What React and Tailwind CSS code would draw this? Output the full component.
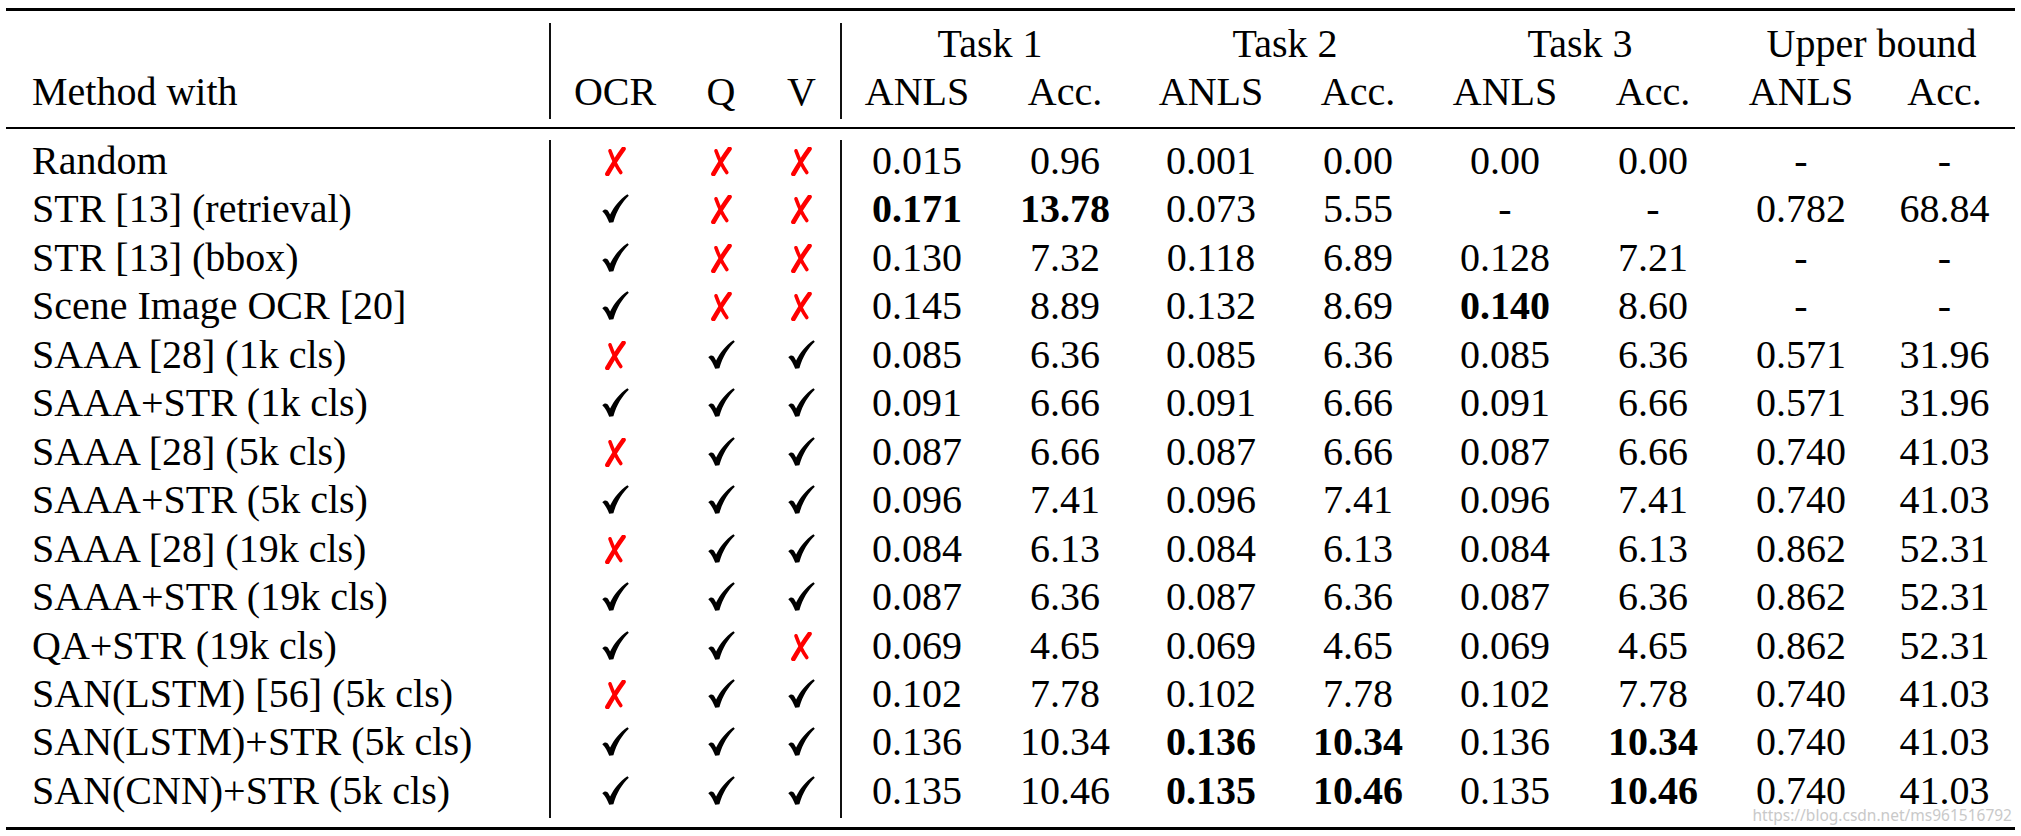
import React from "react";

const COLS =
  "grid grid-cols-[543px_130px_84px_77px_152px_146px_146px_148px_146px_150px_146px_141px]";
const F = "font-serif text-[40px] leading-[41px] text-black ";

function Check() {
  return (
    <svg width="27" height="29" viewBox="0 0 27 29">
      <path
        d="M0.3 17.2 C2.6 14.8 5.2 15.2 6.6 17.8 L8.1 20.6 C12 12.6 17.6 5.6 25.4 0.2 L26.8 1.8 C20 8.4 14.8 16.6 11.4 28.2 L7.2 28.8 C5.4 24.2 3.2 19.8 0.3 17.2 Z"
        fill="#000"
      />
    </svg>
  );
}

function Cross() {
  return (
    <svg width="23" height="29" viewBox="0 0 23 29">
      <path d="M19.5 1.8 Q12 12 3.4 27" stroke="#ff0000" strokeWidth="4.6" strokeLinecap="round" fill="none" />
      <path d="M6 3.8 Q10.5 16.5 16.8 25.5" stroke="#ff0000" strokeWidth="3.6" strokeLinecap="round" fill="none" />
    </svg>
  );
}

const rows = [
  ["Random", "x", "x", "x", ["0.015", "0.96", "0.001", "0.00", "0.00", "0.00", "-", "-"], []],
  ["STR [13] (retrieval)", "c", "x", "x", ["0.171", "13.78", "0.073", "5.55", "-", "-", "0.782", "68.84"], [0, 1]],
  ["STR [13] (bbox)", "c", "x", "x", ["0.130", "7.32", "0.118", "6.89", "0.128", "7.21", "-", "-"], []],
  ["Scene Image OCR [20]", "c", "x", "x", ["0.145", "8.89", "0.132", "8.69", "0.140", "8.60", "-", "-"], [4]],
  ["SAAA [28] (1k cls)", "x", "c", "c", ["0.085", "6.36", "0.085", "6.36", "0.085", "6.36", "0.571", "31.96"], []],
  ["SAAA+STR (1k cls)", "c", "c", "c", ["0.091", "6.66", "0.091", "6.66", "0.091", "6.66", "0.571", "31.96"], []],
  ["SAAA [28] (5k cls)", "x", "c", "c", ["0.087", "6.66", "0.087", "6.66", "0.087", "6.66", "0.740", "41.03"], []],
  ["SAAA+STR (5k cls)", "c", "c", "c", ["0.096", "7.41", "0.096", "7.41", "0.096", "7.41", "0.740", "41.03"], []],
  ["SAAA [28] (19k cls)", "x", "c", "c", ["0.084", "6.13", "0.084", "6.13", "0.084", "6.13", "0.862", "52.31"], []],
  ["SAAA+STR (19k cls)", "c", "c", "c", ["0.087", "6.36", "0.087", "6.36", "0.087", "6.36", "0.862", "52.31"], []],
  ["QA+STR (19k cls)", "c", "c", "x", ["0.069", "4.65", "0.069", "4.65", "0.069", "4.65", "0.862", "52.31"], []],
  ["SAN(LSTM) [56] (5k cls)", "x", "c", "c", ["0.102", "7.78", "0.102", "7.78", "0.102", "7.78", "0.740", "41.03"], []],
  ["SAN(LSTM)+STR (5k cls)", "c", "c", "c", ["0.136", "10.34", "0.136", "10.34", "0.136", "10.34", "0.740", "41.03"], [2, 3, 5]],
  ["SAN(CNN)+STR (5k cls)", "c", "c", "c", ["0.135", "10.46", "0.135", "10.46", "0.135", "10.46", "0.740", "41.03"], [2, 3, 5]],
];

function Mark({ v, border }) {
  return (
    <div
      className={
        "flex justify-center items-start " +
        (v === "x" ? "pt-[7px] " : "pt-[6px] ") +
        (border ? "border-l-2 border-[#111]" : "")
      }
    >
      {v === "x" ? <Cross /> : <Check />}
    </div>
  );
}

function H({ className = "", children }) {
  return <div className={F + "text-center " + className}>{children}</div>;
}

export default function App() {
  return (
    <div className="relative w-[2021px] h-[836px] bg-white overflow-hidden font-serif [--font-serif:serif]">
      <div className="ml-[6px] w-[2009px] pt-[8px]">
        <div className="h-[3px] bg-black" />

        {/* header */}
        <div className={COLS + " mt-[12px] grid-rows-[48px_48px]"}>
          <div />
          <div className="border-l-2 border-[#111]" />
          <div />
          <div />
          <H className="col-span-2 border-l-2 border-[#111]">Task 1</H>
          <H className="col-span-2">Task 2</H>
          <H className="col-span-2">Task 3</H>
          <H className="col-span-2">Upper bound</H>

          <div className={F + "pl-[26px]"}>Method with</div>
          <H className="border-l-2 border-[#111]">OCR</H>
          <H>Q</H>
          <H>V</H>
          <H className="border-l-2 border-[#111]">ANLS</H>
          <H>Acc.</H>
          <H>ANLS</H>
          <H>Acc.</H>
          <H>ANLS</H>
          <H>Acc.</H>
          <H>ANLS</H>
          <H>Acc.</H>
        </div>

        <div className="mt-[8px] h-[2px] bg-black" />

        {/* body */}
        <div className={COLS + " mt-[11px] auto-rows-[48.46px]"}>
          {rows.map(([name, o, q, v, vals, bold], i) => (
            <React.Fragment key={i}>
              <div className={F + "pl-[26px] whitespace-nowrap"}>{name}</div>
              <Mark v={o} border />
              <Mark v={q} />
              <Mark v={v} />
              {vals.map((val, j) => (
                <div
                  key={j}
                  className={
                    F +
                    "text-center " +
                    (bold.includes(j) ? "font-bold " : "font-normal ") +
                    (j === 0 ? "border-l-2 border-[#111]" : "")
                  }
                >
                  {val}
                </div>
              ))}
            </React.Fragment>
          ))}
        </div>

        <div className="mt-[8.6px] h-[3px] bg-black" />
      </div>

      <div className="absolute right-[9px] top-[808px] text-[15.5px] leading-none text-[#c9c9c9] whitespace-nowrap font-sans">
        https://blog.csdn.net/ms961516792
      </div>
    </div>
  );
}
